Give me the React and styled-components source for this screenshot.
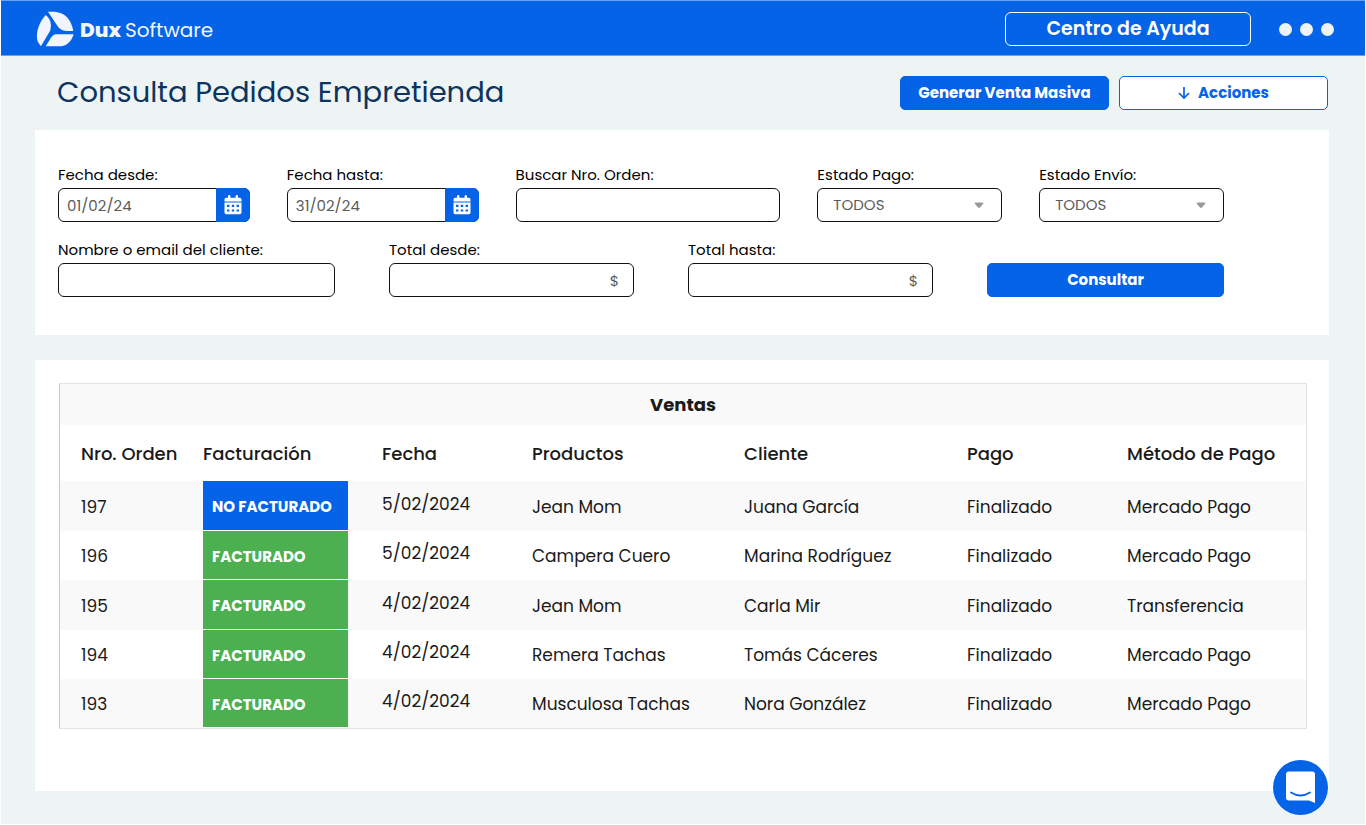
import React from "react";
import styled, { createGlobalStyle } from "styled-components";

const blue = "#0563e8";
const green = "#4caf50";

const GlobalStyle = createGlobalStyle`
  *, *::before, *::after { box-sizing: border-box; }
  body {
    margin: 0;
    background: #fff;
    color: #1a1a1a;
    font-family: Poppins, Inter, "Open Sans", sans-serif;
  }
  button, input, select { font: inherit; }
  button { cursor: pointer; }
`;

const Page = styled.div`
  min-height: 100vh;
  padding-bottom: 33px;
  background: #eef4f4;
  border: solid #fff;
  border-width: 0 1px 1px;
`;

const TopBar = styled.header`
  display: flex;
  align-items: center;
  justify-content: space-between;
  height: 56px;
  padding: 2px 31px 0 35px;
  background: ${blue};
  border: solid #68a1f1;
  border-width: 1px 0;
`;

const Brand = styled.a`
  display: flex;
  align-items: center;
  gap: 6px;
  color: #f2f5fd;
  font-size: 20px;
  line-height: 28px;
  text-decoration: none;

  strong { font-weight: 800; }
  svg { display: block; }
`;

const BrandName = styled.span`
  display: flex;
  gap: 4px;
  padding-top: 2px;
`;

const TopActions = styled.div`
  display: flex;
  align-items: center;
  gap: 28px;
`;

const HelpButton = styled.button`
  width: 246px;
  height: 34px;
  padding: 0;
  background: transparent;
  border: 1px solid #fff;
  border-radius: 6px;
  color: #fff;
  font-size: 19px;
  font-weight: 600;
  line-height: 24px;
`;

const DotsButton = styled.button`
  display: flex;
  gap: 8px;
  padding: 0;
  background: none;
  border: 0;
`;

const Dot = styled.span`
  width: 13px;
  height: 13px;
  background: #eef4f4;
  border-radius: 50%;
`;

const Content = styled.main`
  display: flex;
  flex-direction: column;
  padding: 20px 36px 0 34px;
`;

const TitleRow = styled.div`
  display: flex;
  justify-content: space-between;
  align-items: center;
  height: 34px;
  margin-bottom: 20px;
  padding: 0 1px 0 22px;
`;

const Title = styled.h1`
  margin: 0;
  padding-bottom: 2px;
  color: #0d3461;
  font-size: 29px;
  font-weight: 400;
  line-height: 32px;
`;

const TitleActions = styled.div`
  display: flex;
  gap: 10px;
`;

const Button = styled.button`
  display: flex;
  align-items: center;
  justify-content: center;
  gap: 8px;
  width: ${(p) => (p.$fill ? "100%" : "209px")};
  height: 34px;
  padding: 0;
  background: ${(p) => (p.$outline ? "#fff" : blue)};
  border: 1px solid ${blue};
  border-radius: 5px;
  color: ${(p) => (p.$outline ? blue : "#fff")};
  font-size: 15px;
  font-weight: 700;
  line-height: 20px;
`;

const Panel = styled.section`
  background: #fff;
  padding: ${(p) => p.$padding};
  & + & { margin-top: 25px; }
`;

const Filters = styled.form`
  display: flex;
  flex-direction: column;
  gap: 17px;
`;

const FilterRow = styled.div`
  display: grid;
  grid-template-columns: ${(p) => p.$columns};
  gap: ${(p) => p.$gap};
  align-items: end;
`;

const Field = styled.div`
  display: flex;
  flex-direction: column;
  gap: 3px;
  min-width: 0;
`;

const Label = styled.label`
  color: #000;
  font-size: 15px;
  line-height: 21px;
  white-space: nowrap;
`;

const Control = styled.div`
  position: relative;
  display: flex;
  align-items: center;
  height: 34px;
  background: #fff;
  border: 1px solid #111;
  border-radius: 6px;
  color: #5c5c5c;
  font-size: 15px;
`;

const TextInput = styled.input`
  flex: 1;
  min-width: 0;
  height: 32px;
  padding: 0 8px;
  background: transparent;
  border: 0;
  border-radius: 5px;
  color: inherit;
`;

const Currency = styled.span`
  padding-right: 14px;
`;

const CalendarButton = styled.button`
  display: flex;
  align-items: center;
  justify-content: center;
  flex: none;
  width: 34px;
  height: 34px;
  margin: -1px;
  padding: 0;
  background: ${blue};
  border: 0;
  border-radius: 0 6px 6px 0;
`;

const SelectInput = styled.select`
  width: 100%;
  height: 32px;
  padding: 0 32px 1px 15px;
  appearance: none;
  background: transparent;
  border: 0;
  border-radius: 5px;
  color: inherit;
`;

const Caret = styled.svg`
  position: absolute;
  right: 17px;
  top: 13px;
  pointer-events: none;
`;

const SalesTable = styled.table`
  width: 100%;
  table-layout: fixed;
  border-collapse: separate;
  border-spacing: 0;
  border: 1px solid #e4e4e4;
  border-left-color: #c8c8c8;
  text-align: left;
`;

const TableTitle = styled.th`
  height: 41px;
  padding: 0;
  background: #f9f9f9;
  font-size: 18px;
  font-weight: 700;
  text-align: center;
`;

const HeadCell = styled.th`
  height: 56px;
  padding: 0 0 0 ${(p) => p.$indent};
  font-size: 18px;
  font-weight: 500;
  white-space: nowrap;
`;

const Row = styled.tr`
  height: 49px;
  &:nth-child(odd) { background: #f9f9f9; }
  &:nth-child(odd):not(:last-child) { height: 50px; }
`;

const Cell = styled.td`
  padding: ${(p) => (p.$raised ? "0" : "1px")} 0 ${(p) => (p.$raised ? "5px" : "0")} ${(p) => p.$indent};
  font-size: 17px;
  white-space: nowrap;
`;

const StatusCell = styled.td`
  padding: 2px 0 0 9px;
  background: ${(p) => (p.$billed ? green : blue)};
  border-bottom: 1px solid #fff;
  color: #fff;
  font-size: 15px;
  font-weight: 700;
  white-space: nowrap;
`;

const ChatButton = styled.button`
  position: fixed;
  right: 38px;
  bottom: 10px;
  width: 55px;
  height: 55px;
  padding: 0;
  background: ${blue};
  border: 0;
  border-radius: 50%;
  svg { display: block; }
`;

const Logo = () => (
  <svg width="38" height="36" viewBox="0 0 114 108" fill="#f2f5fd" aria-hidden="true">
    <path d="M29 12C42 22 49 38 42 60L15 105C11 102 7 97 4 88C-1 66 8 36 29 12Z" />
    <path d="M36 2H56C88 5 106 26 112 60H98C82 60 72 56 64 44Z" />
    <path d="M29 106L44 82C48 75 53 70 61 70H113C107 89 95 104 76 106Z" />
  </svg>
);

const CalendarIcon = () => (
  <svg width="18" height="20" viewBox="0 0 18 20" fill="#fff" aria-hidden="true">
    <path d="M4 1.2a1.2 1.2 0 0 1 2.400 0V2.800h5.200V1.200a1.200 1.200 0 0 1 2.400 0V2.800h1.800A1.700 1.700 0 0 1 17.500 4.500V6.400H.5V4.500A1.700 1.700 0 0 1 2.200 2.800H4Z" />
    <path
      fillRule="evenodd"
      d="M.5 7.500h17v10a1.700 1.700 0 0 1-1.700 1.700H2.200A1.700 1.700 0 0 1 .5 17.500ZM3 9.800v2.200h2.400V9.800ZM7.800 9.800v2.200h2.400V9.800ZM12.600 9.800v2.200H15V9.800ZM3 14.400v2.200h2.400v-2.200ZM7.800 14.400v2.200h2.400v-2.200ZM12.600 14.400v2.200H15v-2.200Z"
    />
  </svg>
);

const ArrowIcon = () => (
  <svg width="12" height="14" viewBox="0 0 12 14" fill="none" stroke="currentColor" strokeWidth="1.700" aria-hidden="true">
    <path d="M6 1V12M1 7L6 12L11 7" />
  </svg>
);

const ChatIcon = () => (
  <svg width="55" height="55" viewBox="0 0 55 55" aria-hidden="true">
    <path d="M16 11.500H39Q42 11.500 42 14.500V43L36 40.500H16Q13 40.500 13 37.500V14.500Q13 11.500 16 11.500Z" fill="#fff" />
    <path d="M18 32.500Q27.500 38.500 37 32.500" fill="none" stroke={blue} strokeWidth="1.800" strokeLinecap="round" />
  </svg>
);

const DateField = ({ id, label, value }) => (
  <Field>
    <Label htmlFor={id}>{label}</Label>
    <Control>
      <TextInput id={id} defaultValue={value} />
      <CalendarButton type="button" aria-label="Abrir calendario">
        <CalendarIcon />
      </CalendarButton>
    </Control>
  </Field>
);

const TextField = ({ id, label, suffix }) => (
  <Field>
    <Label htmlFor={id}>{label}</Label>
    <Control>
      <TextInput id={id} />
      {suffix && <Currency>{suffix}</Currency>}
    </Control>
  </Field>
);

const SelectField = ({ id, label }) => (
  <Field>
    <Label htmlFor={id}>{label}</Label>
    <Control>
      <SelectInput id={id}>
        <option>TODOS</option>
      </SelectInput>
      <Caret width="10" height="7" viewBox="0 0 10 7" aria-hidden="true">
        <path d="M1.500.5H8.500Q10 .8 9 2L6 5.500Q5 6.300 4 5.500L1 2Q0 .8 1.500.5Z" fill="#999" />
      </Caret>
    </Control>
  </Field>
);

const columns = [
  { name: "Nro. Orden", width: 143, indent: "21px" },
  { name: "Facturación", width: 145, indent: "0" },
  { name: "Fecha", width: 184, indent: "34px" },
  { name: "Productos", width: 212, indent: "0" },
  { name: "Cliente", width: 223, indent: "0" },
  { name: "Pago", width: 160, indent: "0" },
  { name: "Método de Pago", width: 179, indent: "0" },
];

const orders = [
  { id: 197, billed: false, date: "5/02/2024", product: "Jean Mom", client: "Juana García", method: "Mercado Pago" },
  { id: 196, billed: true, date: "5/02/2024", product: "Campera Cuero", client: "Marina Rodríguez", method: "Mercado Pago" },
  { id: 195, billed: true, date: "4/02/2024", product: "Jean Mom", client: "Carla Mir", method: "Transferencia" },
  { id: 194, billed: true, date: "4/02/2024", product: "Remera Tachas", client: "Tomás Cáceres", method: "Mercado Pago" },
  { id: 193, billed: true, date: "4/02/2024", product: "Musculosa Tachas", client: "Nora González", method: "Mercado Pago" },
];

export default function App() {
  return (
    <Page>
      <GlobalStyle />
      <TopBar>
        <Brand href="#">
          <Logo />
          <BrandName>
            <strong>Dux</strong>
            <span>Software</span>
          </BrandName>
        </Brand>
        <TopActions>
          <HelpButton type="button">Centro de Ayuda</HelpButton>
          <DotsButton type="button" aria-label="Más opciones">
            <Dot />
            <Dot />
            <Dot />
          </DotsButton>
        </TopActions>
      </TopBar>

      <Content>
        <TitleRow>
          <Title>Consulta Pedidos Empretienda</Title>
          <TitleActions>
            <Button type="button">Generar Venta Masiva</Button>
            <Button type="button" $outline>
              <ArrowIcon />
              Acciones
            </Button>
          </TitleActions>
        </TitleRow>

        <Panel $padding="34px 105px 38px 23px">
          <Filters onSubmit={(e) => e.preventDefault()}>
            <FilterRow $columns="192fr 192fr 265fr 185fr 185fr" $gap="37px">
              <DateField id="fecha-desde" label="Fecha desde:" value="01/02/24" />
              <DateField id="fecha-hasta" label="Fecha hasta:" value="31/02/24" />
              <TextField id="nro-orden" label="Buscar Nro. Orden:" />
              <SelectField id="estado-pago" label="Estado Pago:" />
              <SelectField id="estado-envio" label="Estado Envío:" />
            </FilterRow>
            <FilterRow $columns="277fr 245fr 245fr 237fr" $gap="54px">
              <TextField id="cliente" label="Nombre o email del cliente:" />
              <TextField id="total-desde" label="Total desde:" suffix="$" />
              <TextField id="total-hasta" label="Total hasta:" suffix="$" />
              <Button type="submit" $fill>
                Consultar
              </Button>
            </FilterRow>
          </Filters>
        </Panel>

        <Panel $padding="23px 22px 62px 24px">
          <SalesTable>
            <colgroup>
              {columns.map((c) => (
                <col key={c.name} width={c.width} />
              ))}
            </colgroup>
            <thead>
              <tr>
                <TableTitle colSpan={7} scope="colgroup">
                  Ventas
                </TableTitle>
              </tr>
              <tr>
                {columns.map((c) => (
                  <HeadCell key={c.name} scope="col" $indent={c.indent}>
                    {c.name}
                  </HeadCell>
                ))}
              </tr>
            </thead>
            <tbody>
              {orders.map((o) => (
                <Row key={o.id}>
                  <Cell $indent="21px">{o.id}</Cell>
                  <StatusCell $billed={o.billed}>{o.billed ? "FACTURADO" : "NO FACTURADO"}</StatusCell>
                  <Cell $indent="34px" $raised>
                    {o.date}
                  </Cell>
                  <Cell $indent="0">{o.product}</Cell>
                  <Cell $indent="0">{o.client}</Cell>
                  <Cell $indent="0">Finalizado</Cell>
                  <Cell $indent="0">{o.method}</Cell>
                </Row>
              ))}
            </tbody>
          </SalesTable>
        </Panel>
      </Content>

      <ChatButton type="button" aria-label="Abrir chat">
        <ChatIcon />
      </ChatButton>
    </Page>
  );
}
